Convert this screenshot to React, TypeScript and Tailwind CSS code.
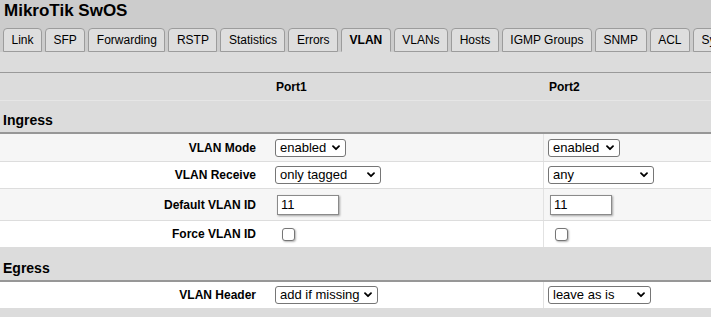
const tabs = [
  'Link',
  'SFP',
  'Forwarding',
  'RSTP',
  'Statistics',
  'Errors',
  'VLAN',
  'VLANs',
  'Hosts',
  'IGMP Groups',
  'SNMP',
  'ACL',
  'System',
];

const Chevron = () => (
  <svg className="absolute right-[5px] top-1/2 -translate-y-1/2" width="8" height="6" viewBox="0 0 8 6" fill="none">
    <path d="M1 1.2 L4 4.2 L7 1.2" stroke="#000" strokeWidth="1.8" strokeLinecap="round" strokeLinejoin="round" />
  </svg>
);

// drop-down drawn by hand so the box and text sit exactly where the native one does
const Select = ({ value, width }: { value: string; width: string }) => (
  <div
    className={`relative flex h-[18px] items-center rounded-[3px] border border-[#767676] bg-white pl-[4px] text-[13px] leading-[16px] ${width}`}
  >
    <span>{value}</span>
    <Chevron />
  </div>
);

const NumberInput = ({ value }: { value: string }) => (
  <input
    defaultValue={value}
    className="ml-[2px] h-[20px] w-[62px] border border-[#8a8a8a] bg-white px-[3px] text-[13px] text-black shadow-[1px_1px_2px_rgba(0,0,0,0.35)] outline-none"
  />
);

const Checkbox = () => (
  <input
    type="checkbox"
    className="ml-[7px] h-[13px] w-[13px] appearance-none rounded-[3px] border border-[#767676] bg-white shadow-[1px_1px_2px_rgba(0,0,0,0.3)]"
  />
);

const Row = ({
  label,
  height,
  bg,
  border = true,
  children,
}: {
  label: string;
  height: string;
  bg: string;
  border?: boolean;
  children: [React.ReactNode, React.ReactNode];
}) => (
  <div
    className={`grid grid-cols-[271px_273px_273px] ${height} ${bg} ${border ? 'border-b border-[#dddddd]' : ''}`}
  >
    <div className="flex items-center justify-end pr-[15px] text-[12px] font-bold">{label}</div>
    <div className="flex items-center border-r border-[#e2e2e2] pl-[4px]">{children[0]}</div>
    <div className="flex items-center border-r border-[#e2e2e2] pl-[4px]">{children[1]}</div>
  </div>
);

const Section = ({ title, height }: { title: string; height: string }) => (
  <div className={`flex items-end border-b-2 border-[#979797] pb-[4px] pl-[3px] ${height}`}>
    <span className="text-[14px] font-bold leading-[16px]">{title}</span>
  </div>
);

const App = () => {
  return (
    <div className="h-[317px] w-[711px] overflow-hidden bg-[#dcdcdc] font-['Liberation_Sans',Arial,sans-serif] text-black">
      <div className="bg-[#cccccc] pt-[1px]">
        <h1 className="pl-[4px] text-[17px] font-bold leading-[20px]">MikroTik SwOS</h1>
        <div className="mt-[7px] flex gap-[3px] whitespace-nowrap pl-[3px]">
          {tabs.map((tab) => (
            <div
              key={tab}
              className={`flex h-[24px] shrink-0 items-center rounded-t-[4px] border border-[#9c9c9c] px-[7.5px] text-[12px] ${
                tab === 'VLAN' ? 'border-b-[#dcdcdc] bg-[#dcdcdc] font-bold' : 'bg-[#dedede]'
              }`}
            >
              {tab}
            </div>
          ))}
        </div>
      </div>

      <div className="h-[21px] border-b border-[#9a9a9a]" />

      <div className="grid h-[28px] grid-cols-[271px_273px_273px] border-b border-[#e6e6e6] text-[12px] font-bold">
        <div />
        <div className="flex items-center pl-[5px]">Port1</div>
        <div className="flex items-center pl-[5px]">Port2</div>
      </div>

      <Section title="Ingress" height="h-[33px]" />

      <Row label="VLAN Mode" height="h-[28px]" bg="bg-[#f6f6f6]">
        <Select value="enabled" width="w-[71px]" />
        <Select value="enabled" width="w-[72px]" />
      </Row>
      <Row label="VLAN Receive" height="h-[27px]" bg="bg-white">
        <Select value="only tagged" width="w-[106px]" />
        <Select value="any" width="w-[106px]" />
      </Row>
      <Row label="Default VLAN ID" height="h-[32px]" bg="bg-[#f6f6f6]">
        <NumberInput value="11" />
        <NumberInput value="11" />
      </Row>
      <Row label="Force VLAN ID" height="h-[26px]" bg="bg-white" border={false}>
        <Checkbox />
        <Checkbox />
      </Row>

      <Section title="Egress" height="h-[35px]" />

      <Row label="VLAN Header" height="h-[26px]" bg="bg-white" border={false}>
        <Select value="add if missing" width="w-[103px]" />
        <Select value="leave as is" width="w-[103px]" />
      </Row>
    </div>
  );
};

export default App;
